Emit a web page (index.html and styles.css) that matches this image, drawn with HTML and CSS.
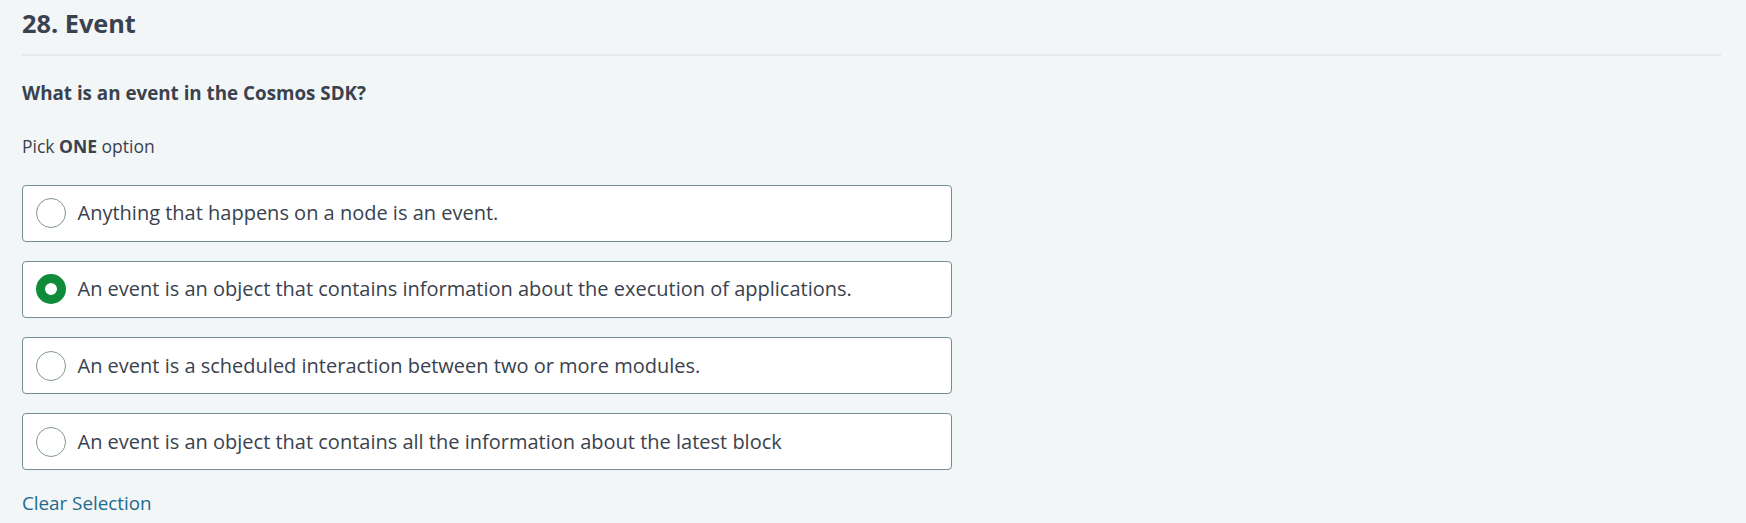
FILE: index.html
```html
<!DOCTYPE html>
<html lang="en">
<head>
<meta charset="utf-8">
<title>28. Event</title>
<link rel="stylesheet" href="styles.css">
</head>
<body>
<main class="page">
  <h1 class="title">28. Event</h1>
  <p class="question">What is an event in the Cosmos SDK?</p>
  <p class="hint">Pick <strong>ONE</strong> option</p>
  <div class="options">
    <label class="option"><span class="radio"></span><span class="option-text">Anything that happens on a node is an event.</span></label>
    <label class="option"><span class="radio radio-checked"></span><span class="option-text">An event is an object that contains information about the execution of applications.</span></label>
    <label class="option"><span class="radio"></span><span class="option-text">An event is a scheduled interaction between two or more modules.</span></label>
    <label class="option"><span class="radio"></span><span class="option-text">An event is an object that contains all the information about the latest block</span></label>
  </div>
  <a class="clear" href="#">Clear Selection</a>
</main>
</body>
</html>
```
FILE: styles.css
```css
html, body {
  margin: 0;
  padding: 0;
  background: #f3f6f7;
}
body {
  font-family: "Open Sans", "Noto Sans", sans-serif;
  color: #39424e;
}
.page {
  padding: 4.5px 25px 0 22px;
}
.title {
  margin: 0;
  font-size: 25.3px;
  line-height: 36px;
  font-weight: 700;
  padding-bottom: 13.5px;
  border-bottom: 2px solid #e3eaea;
}
.question {
  margin: 24.5px 0 0;
  font-size: 18.8px;
  line-height: 24px;
  font-weight: 700;
}
.hint {
  margin: 30px 0 0;
  font-size: 17.5px;
  line-height: 22px;
}
.hint strong {
  font-weight: 700;
}
.options {
  margin-top: 28px;
  display: flex;
  flex-direction: column;
  gap: 19.3px;
  width: 930px;
}
.option {
  box-sizing: border-box;
  height: 57px;
  display: flex;
  align-items: center;
  gap: 11.5px;
  padding-left: 13px;
  background: #ffffff;
  border: 1px solid #728e92;
  border-radius: 4px;
  cursor: pointer;
}
.radio {
  box-sizing: border-box;
  width: 30px;
  height: 30px;
  flex: none;
  border-radius: 50%;
  border: 1px solid #7f9598;
  background: #ffffff;
}
.radio-checked {
  border: 9px solid #0f8b3a;
}
.option-text {
  font-size: 20px;
  line-height: 26px;
}
.clear {
  display: inline-block;
  margin-top: 21px;
  font-size: 18.8px;
  line-height: 24px;
  color: #236a8c;
  text-decoration: none;
}
```
